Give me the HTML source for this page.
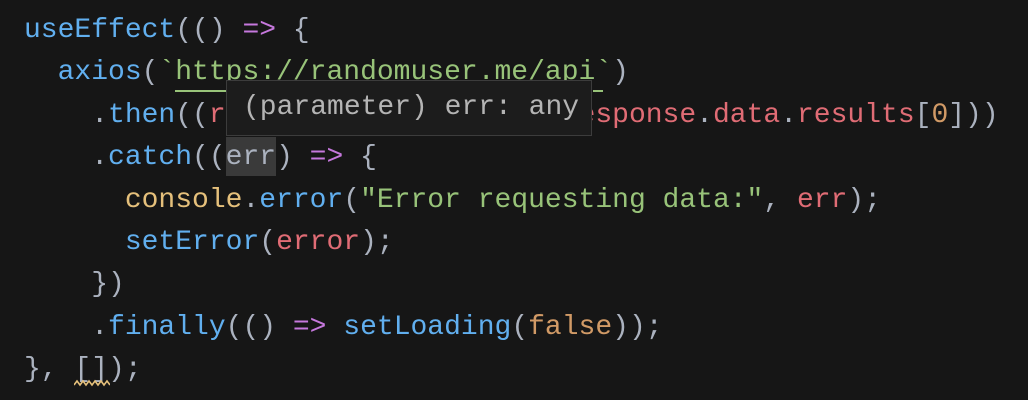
<!DOCTYPE html>
<html><head><meta charset="utf-8"><style>
html,body{margin:0;padding:0;background:#161616;width:1028px;height:400px;overflow:hidden}
#c{position:absolute;left:24px;top:10px;font-family:"Liberation Mono",monospace;font-size:28px;line-height:42.4px;color:#abb2bf;white-space:pre;letter-spacing:0}
.f{color:#61afef}.k{color:#c678dd}.s{color:#98c379}.v{color:#e06c75}.y{color:#e5c07b}.o{color:#d19a66}
#tip{position:absolute;left:226px;top:80px;width:366px;height:56px;background:#1c1c1c;border:1px solid #3c3c3c;font-family:"Liberation Mono",monospace;font-size:28px;color:#b4b4b4;line-height:54px;padding-left:16px;box-sizing:border-box;white-space:pre}
#hl{position:absolute;left:226px;top:137px;width:50px;height:39px;background:#3a3a3a}
#ul{position:absolute;left:175px;top:90px;width:51px;height:2px;background:#98c379}
#ul2{position:absolute;left:593px;top:90px;width:10px;height:2px;background:#98c379}
</style></head><body>
<div id="hl"></div>
<div id="c"><span class="f">useEffect</span>(() <span class="k">=&gt;</span> {
  <span class="f">axios</span>(<span class="s">`https://randomuser.me/api`</span>)
    .<span class="f">then</span>((<span class="v">response</span>) <span class="k">=&gt;</span> <span class="f">setUser</span>(<span class="v">response</span>.<span class="v">data</span>.<span class="v">results</span>[<span class="o">0</span>]))
    .<span class="f">catch</span>((<span class="v" style="color:#abb2bf">err</span>) <span class="k">=&gt;</span> {
      <span class="y">console</span>.<span class="f">error</span>(<span class="s">"Error requesting data:"</span>, <span class="v">err</span>);
      <span class="f">setError</span>(<span class="v">error</span>);
    })
    .<span class="f">finally</span>(() <span class="k">=&gt;</span> <span class="f">setLoading</span>(<span class="o">false</span>));
}, []);</div>
<div id="ul"></div><div id="ul2"></div>
<svg style="position:absolute;left:74px;top:379px" width="36" height="8"><path d="M0 6 L3 2 L6 6 L9 2 L12 6 L15 2 L18 6 L21 2 L24 6 L27 2 L30 6 L33 2 L36 6" stroke="#e5c07b" stroke-width="1.6" fill="none"/></svg>
<div id="tip">(parameter) err: any</div>
</body></html>
